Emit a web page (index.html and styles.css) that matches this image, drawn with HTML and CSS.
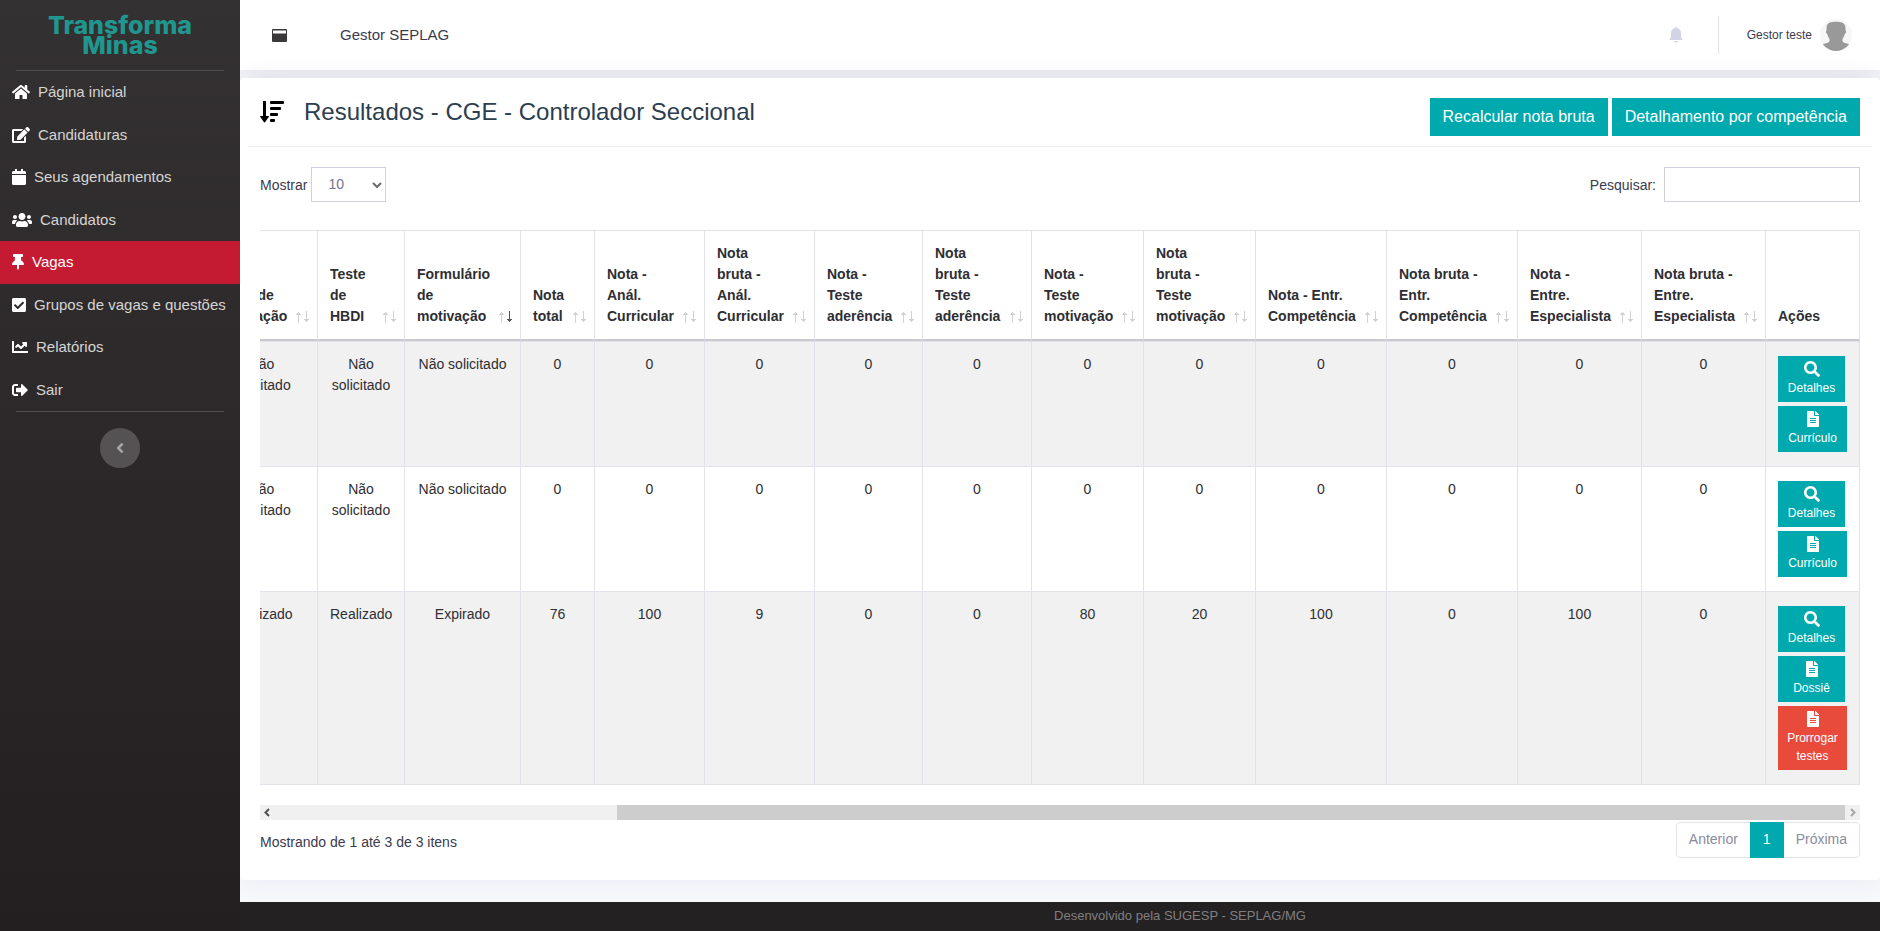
FILE: index.html
```html
<!DOCTYPE html>
<html lang="pt-BR">
<head>
<meta charset="utf-8">
<title>Transforma Minas - Resultados</title>
<link rel="stylesheet" href="styles.css">
</head>
<body>
<svg class="sprite" aria-hidden="true">
  <symbol id="i-search" viewBox="0 0 512 512"><path d="M505 442.7L405.3 343c-4.500-4.500-10.600-7-17-7H372c27.600-35.300 44-79.700 44-128C416 93.100 322.900 0 208 0S0 93.100 0 208s93.100 208 208 208c48.300 0 92.700-16.400 128-44v16.300c0 6.400 2.500 12.500 7 17l99.700 99.700c9.400 9.400 24.600 9.400 33.900 0l28.300-28.300c9.400-9.400 9.400-24.600.1-34zM208 336c-70.700 0-128-57.200-128-128 0-70.700 57.200-128 128-128 70.700 0 128 57.200 128 128 0 70.700-57.200 128-128 128z"/></symbol>
  <symbol id="i-file" viewBox="0 0 384 512"><path d="M224 136V0H24C10.700 0 0 10.700 0 24v464c0 13.300 10.700 24 24 24h336c13.300 0 24-10.700 24-24V160H248c-13.200 0-24-10.800-24-24zm64 236c0 6.600-5.400 12-12 12H108c-6.600 0-12-5.400-12-12v-8c0-6.600 5.400-12 12-12h168c6.600 0 12 5.400 12 12v8zm0-64c0 6.600-5.400 12-12 12H108c-6.600 0-12-5.400-12-12v-8c0-6.600 5.400-12 12-12h168c6.600 0 12 5.400 12 12v8zm0-72v8c0 6.600-5.400 12-12 12H108c-6.600 0-12-5.400-12-12v-8c0-6.600 5.400-12 12-12h168c6.600 0 12 5.400 12 12zm96-114.100v6.100H256V0h6.100c6.400 0 12.500 2.500 17 7l97.900 98c4.500 4.500 7 10.600 7 16.900z"/></symbol>
  <symbol id="i-sort" viewBox="0 0 13 12"><path fill="#c9c9cc" d="M2 1h1v11H2zM1 2h3v1H1zM0 3h5v1H0zM10 0h1v11h-1zM9 9h3v1H9zM8 8h5v1H8z" opacity=".85"/></symbol>
  <symbol id="i-sort-desc" viewBox="0 0 13 12"><path fill="#c9c9cc" d="M2 1h1v11H2zM1 2h3v1H1zM0 3h5v1H0z" opacity=".85"/><path fill="#55555c" d="M10 0h1v11h-1zM9 9h3v1H9zM8 8h5v1H8z"/></symbol>
</svg>
<div class="app">
  <aside class="sidebar">
    <a class="brand" href="#">Transforma<br>Minas</a>
    <nav class="menu">
      <a class="menu-item" href="#"><svg class="icon" viewBox="0 0 576 512"><path d="M280.37 148.26L96 300.11V464a16 16 0 0 0 16 16l112.06-.29a16 16 0 0 0 15.92-16V368a16 16 0 0 1 16-16h64a16 16 0 0 1 16 16v95.64a16 16 0 0 0 16 16.05L464 480a16 16 0 0 0 16-16V300L295.67 148.26a12.19 12.19 0 0 0-15.3 0zM571.6 251.47L488 182.56V44.05a12 12 0 0 0-12-12h-56a12 12 0 0 0-12 12v72.61L318.47 43a48 48 0 0 0-61 0L4.34 251.47a12 12 0 0 0-1.6 16.9l25.5 31A12 12 0 0 0 45.15 301l235.22-193.74a12.19 12.19 0 0 1 15.3 0L530.9 301a12 12 0 0 0 16.9-1.6l25.5-31a12 12 0 0 0-1.7-16.93z"/></svg>Página inicial</a>
      <a class="menu-item" href="#"><svg class="icon" viewBox="0 0 576 512"><path d="M402.6 83.2l90.2 90.2c3.8 3.8 3.8 10 0 13.8L274.4 405.6l-92.8 10.3c-12.4 1.4-22.9-9.1-21.5-21.5l10.3-92.8L388.8 83.2c3.8-3.8 10-3.8 13.8 0zm162-22.9l-48.8-48.8c-15.2-15.2-39.9-15.2-55.2 0l-35.4 35.4c-3.8 3.8-3.8 10 0 13.8l90.2 90.2c3.8 3.8 10 3.8 13.8 0l35.4-35.4c15.2-15.3 15.2-40 0-55.2zM384 346.2V448H64V128h229.8c3.2 0 6.2-1.3 8.5-3.5l40-40c7.6-7.6 2.2-20.5-8.5-20.5H48C21.5 64 0 85.5 0 112v352c0 26.5 21.5 48 48 48h352c26.5 0 48-21.5 48-48V306.2c0-10.7-12.9-16-20.5-8.5l-40 40c-2.2 2.3-3.5 5.3-3.5 8.5z"/></svg>Candidaturas</a>
      <a class="menu-item" href="#"><svg class="icon" viewBox="0 0 448 512"><path d="M12 192h424c6.6 0 12 5.4 12 12v260c0 26.5-21.5 48-48 48H48c-26.5 0-48-21.5-48-48V204c0-6.6 5.4-12 12-12zm436-44v-36c0-26.5-21.5-48-48-48h-48V12c0-6.6-5.4-12-12-12h-40c-6.6 0-12 5.4-12 12v52H160V12c0-6.6-5.4-12-12-12h-40c-6.6 0-12 5.4-12 12v52H48C21.5 64 0 85.5 0 112v36c0 6.6 5.4 12 12 12h424c6.6 0 12-5.4 12-12z"/></svg>Seus agendamentos</a>
      <a class="menu-item" href="#"><svg class="icon" viewBox="0 0 640 512"><path d="M96 224c35.3 0 64-28.7 64-64s-28.7-64-64-64-64 28.7-64 64 28.7 64 64 64zm448 0c35.3 0 64-28.7 64-64s-28.7-64-64-64-64 28.7-64 64 28.7 64 64 64zm32 32h-64c-17.6 0-33.5 7.1-45.1 18.6 40.3 22.1 68.9 62 75.1 109.4h66c17.7 0 32-14.3 32-32v-32c0-35.3-28.7-64-64-64zm-256 0c61.9 0 112-50.1 112-112S381.9 32 320 32 208 82.1 208 144s50.1 112 112 112zm76.8 32h-8.3c-20.8 10-43.9 16-68.5 16s-47.6-6-68.5-16h-8.3C179.6 288 128 339.6 128 403.2V432c0 26.5 21.5 48 48 48h288c26.5 0 48-21.5 48-48v-28.8c0-63.6-51.6-115.2-115.2-115.2zm-223.7-13.4C161.5 263.1 145.6 256 128 256H64c-35.3 0-64 28.7-64 64v32c0 17.7 14.3 32 32 32h65.9c6.3-47.4 34.9-87.3 75.2-109.4z"/></svg>Candidatos</a>
      <a class="menu-item active" href="#"><svg class="icon" viewBox="0 0 384 512"><path d="M298.028 214.267L285.793 96H328c13.255 0 24-10.745 24-24V24c0-13.255-10.745-24-24-24H56C42.745 0 32 10.745 32 24v48c0 13.255 10.745 24 24 24h42.207L85.972 214.267C37.465 236.82 0 277.261 0 328c0 13.255 10.745 24 24 24h136v104.007c0 1.242.289 2.467.845 3.578l24 48c2.941 5.882 11.364 5.893 14.311 0l24-48a8.008 8.008 0 0 0 .845-3.578V352h136c13.255 0 24-10.745 24-24-.001-51.183-37.983-91.42-85.973-113.733z"/></svg>Vagas</a>
      <a class="menu-item" href="#"><svg class="icon" viewBox="0 0 448 512"><path d="M400 480H48c-26.51 0-48-21.49-48-48V80c0-26.51 21.49-48 48-48h352c26.51 0 48 21.49 48 48v352c0 26.51-21.49 48-48 48zm-204.686-98.059l184-184c6.248-6.248 6.248-16.379 0-22.627l-22.627-22.627c-6.248-6.248-16.379-6.249-22.628 0L184 302.745l-70.059-70.059c-6.248-6.248-16.379-6.248-22.628 0l-22.627 22.627c-6.248 6.248-6.248 16.379 0 22.627l104 104c6.249 6.25 16.379 6.25 22.628.001z"/></svg>Grupos de vagas e questões</a>
      <a class="menu-item" href="#"><svg class="icon" viewBox="0 0 512 512"><path d="M496 384H64V80c0-8.84-7.16-16-16-16H16C7.16 64 0 71.16 0 80v336c0 17.67 14.33 32 32 32h464c8.84 0 16-7.16 16-16v-32c0-8.84-7.16-16-16-16zM464 96H345.94c-21.38 0-32.09 25.85-16.97 40.97l32.4 32.4L288 242.75l-73.37-73.37c-12.5-12.5-32.76-12.5-45.25 0l-68.69 68.69c-6.25 6.25-6.25 16.38 0 22.63l22.62 22.62c6.25 6.25 16.38 6.25 22.63 0L192 237.25l73.37 73.37c12.5 12.5 32.76 12.5 45.25 0l96-96 32.4 32.4c15.12 15.12 40.97 4.41 40.97-16.97V112c.01-8.84-7.15-16-15.99-16z"/></svg>Relatórios</a>
      <a class="menu-item" href="#"><svg class="icon" viewBox="0 0 512 512"><path d="M497 273L329 441c-15 15-41 4.500-41-17v-96H152c-13.300 0-24-10.700-24-24v-96c0-13.300 10.700-24 24-24h136V88c0-21.400 25.900-32 41-17l168 168c9.300 9.400 9.300 24.600 0 34zM192 436v-40c0-6.600-5.400-12-12-12H96c-17.700 0-32-14.300-32-32V160c0-17.700 14.300-32 32-32h84c6.600 0 12-5.400 12-12V76c0-6.600-5.400-12-12-12H96c-53 0-96 43-96 96v192c0 53 43 96 96 96h84c6.600 0 12-5.400 12-12z"/></svg>Sair</a>
    </nav>
    <button class="collapse" type="button" aria-label="Recolher menu"><svg viewBox="0 0 256 512"><path d="M31.7 239l136-136c9.400-9.400 24.600-9.400 33.900 0l22.600 22.600c9.400 9.400 9.400 24.600 0 33.900L127.900 256l96.400 96.400c9.400 9.400 9.400 24.600 0 33.900L201.700 409c-9.400 9.400-24.600 9.400-33.900 0l-136-136c-9.500-9.400-9.500-24.600-.1-34z"/></svg></button>
  </aside>
  <div class="content">
    <header class="topbar">
      <svg class="topbar-icon" viewBox="0 0 15 13"><path fill-rule="evenodd" d="M1 0h13a1 1 0 0 1 1 1v11a1 1 0 0 1-1 1H1a1 1 0 0 1-1-1V1a1 1 0 0 1 1-1zM1 1.500v3h13v-3z"/></svg>
      <span class="topbar-title">Gestor SEPLAG</span>
      <button class="bell" type="button" aria-label="Notificações"><svg viewBox="0 0 14 16"><path d="M7 0a1 1 0 0 0-1 1C3.300 1.600 2 3.500 2 6v4L.6 12.200V13h12.800v-.8L12 10V6c0-2.500-1.300-4.400-4-5a1 1 0 0 0-1-1zM5 14h4a2 1.500 0 0 1-4 0z"/></svg></button>
      <div class="user">
        <span>Gestor teste</span>
        <svg class="avatar" viewBox="0 0 32 32"><defs><clipPath id="disc"><circle cx="16" cy="16" r="16"/></clipPath></defs><g clip-path="url(#disc)"><path fill="#f6f6f6" d="M0 0h32v32H0z"/><path fill="#999" d="M16 2.800c5 0 9.200 1.200 9.400 5.200l.1 3.500c1 .3.600 3-.8 3.600-.4 2-1 3.400-2.200 4.600-.2 2.300 0 3.300 1.700 4 2.300.9 4.800 1.200 6.800 2.300V32H1v-6c2-1.100 4.500-1.400 6.800-2.300 1.700-.7 1.900-1.700 1.700-4-1.200-1.200-1.800-2.600-2.200-4.600-1.400-.6-1.800-3.300-.8-3.600L6.600 8c.2-4 4.400-5.200 9.400-5.200z"/></g></svg>
      </div>
    </header>
    <main class="card">
      <div class="card-head">
        <svg class="head-icon" viewBox="0 0 24 22"><path d="M3 .5Q3 0 3.500 0h2q.5 0 .5.500V15h2.500q.8.200.2.900L5 21.300q-.5.500-1 0L.3 15.900q-.6-.7.200-.9H3z"/><rect x="10" y="0" width="14" height="3" rx="1"/><rect x="10" y="6" width="11" height="3" rx="1"/><rect x="10" y="12" width="8" height="3" rx="1"/><rect x="10" y="18" width="5" height="3" rx="1"/></svg>
        <h1>Resultados - CGE - Controlador Seccional</h1>
        <div class="head-actions">
          <button class="btn" type="button">Recalcular nota bruta</button>
          <button class="btn" type="button">Detalhamento por competência</button>
        </div>
      </div>
      <div class="card-body">
        <div class="filters">
          <div class="field"><label for="len">Mostrar</label><span class="select-wrap"><select id="len"><option>10</option><option>25</option></select><svg viewBox="0 0 10 6"><path d="M1 1l4 4 4-4"/></svg></span></div>
          <div class="field search"><label for="q">Pesquisar:</label><input id="q" type="search"></div>
        </div>
        <div class="scroller">
          <table>
            <colgroup><col class="w112"><col class="w87"><col class="w116"><col class="w74"><col class="w110"><col class="w110"><col class="w108"><col class="w109"><col class="w112"><col class="w112"><col class="w131"><col class="w131"><col class="w124"><col class="w124"><col class="w94"></colgroup>
            <thead><tr>
              <th>Teste de<br>motivação<svg class="sort"><use href="#i-sort"/></svg></th>
              <th>Teste<br>de<br>HBDI<svg class="sort"><use href="#i-sort"/></svg></th>
              <th>Formulário<br>de<br>motivação<svg class="sort"><use href="#i-sort-desc"/></svg></th>
              <th>Nota<br>total<svg class="sort"><use href="#i-sort"/></svg></th>
              <th>Nota -<br>Anál.<br>Curricular<svg class="sort"><use href="#i-sort"/></svg></th>
              <th>Nota<br>bruta -<br>Anál.<br>Curricular<svg class="sort"><use href="#i-sort"/></svg></th>
              <th>Nota -<br>Teste<br>aderência<svg class="sort"><use href="#i-sort"/></svg></th>
              <th>Nota<br>bruta -<br>Teste<br>aderência<svg class="sort"><use href="#i-sort"/></svg></th>
              <th>Nota -<br>Teste<br>motivação<svg class="sort"><use href="#i-sort"/></svg></th>
              <th>Nota<br>bruta -<br>Teste<br>motivação<svg class="sort"><use href="#i-sort"/></svg></th>
              <th>Nota - Entr.<br>Competência<svg class="sort"><use href="#i-sort"/></svg></th>
              <th>Nota bruta -<br>Entr.<br>Competência<svg class="sort"><use href="#i-sort"/></svg></th>
              <th>Nota -<br>Entre.<br>Especialista<svg class="sort"><use href="#i-sort"/></svg></th>
              <th>Nota bruta -<br>Entre.<br>Especialista<svg class="sort"><use href="#i-sort"/></svg></th>
              <th>Ações</th>
            </tr></thead>
            <tbody>
              <tr><td>Não<br>solicitado</td><td>Não<br>solicitado</td><td>Não solicitado</td><td>0</td><td>0</td><td>0</td><td>0</td><td>0</td><td>0</td><td>0</td><td>0</td><td>0</td><td>0</td><td>0</td>
                <td class="actions"><a class="act" href="#"><svg><use href="#i-search"/></svg>Detalhes</a><a class="act wide" href="#"><svg><use href="#i-file"/></svg>Currículo</a></td></tr>
              <tr><td>Não<br>solicitado</td><td>Não<br>solicitado</td><td>Não solicitado</td><td>0</td><td>0</td><td>0</td><td>0</td><td>0</td><td>0</td><td>0</td><td>0</td><td>0</td><td>0</td><td>0</td>
                <td class="actions"><a class="act" href="#"><svg><use href="#i-search"/></svg>Detalhes</a><a class="act wide" href="#"><svg><use href="#i-file"/></svg>Currículo</a></td></tr>
              <tr><td>Realizado</td><td>Realizado</td><td>Expirado</td><td>76</td><td>100</td><td>9</td><td>0</td><td>0</td><td>80</td><td>20</td><td>100</td><td>0</td><td>100</td><td>0</td>
                <td class="actions"><a class="act" href="#"><svg><use href="#i-search"/></svg>Detalhes</a><a class="act" href="#"><svg><use href="#i-file"/></svg>Dossiê</a><a class="act wide danger" href="#"><svg><use href="#i-file"/></svg>Prorrogar<br>testes</a></td></tr>
            </tbody>
          </table>
        </div>
        <div class="scrollbar" aria-hidden="true">
          <svg class="step" viewBox="0 0 15 15"><path d="M9 4L5.500 7.500 9 11"/></svg>
          <div class="track"><div class="thumb"></div></div>
          <svg class="step off" viewBox="0 0 15 15"><path d="M6 4l3.500 3.500L6 11"/></svg>
        </div>
        <div class="table-foot">
          <span class="info">Mostrando de 1 até 3 de 3 itens</span>
          <div class="pager"><a href="#">Anterior</a><a class="current" href="#">1</a><a href="#">Próxima</a></div>
        </div>
      </div>
    </main>
    <footer class="footer">Desenvolvido pela SUGESP - SEPLAG/MG</footer>
  </div>
</div>
</body>
</html>
```

FILE: styles.css
```css
* { box-sizing: border-box; }
body { margin: 0; background: #f7f8fc; color: #3a3b4d; font: 14px/21px "Liberation Sans", Arial, sans-serif; }
a { text-decoration: none; color: inherit; }
button, select, input { font: inherit; }
button { border: 0; padding: 0; cursor: pointer; }
svg { fill: currentColor; }
.sprite { display: none; }
.app { display: flex; min-height: 100vh; }

.sidebar { position: relative; z-index: 1; flex: 0 0 240px; display: flex; flex-direction: column; background: linear-gradient(#343132, #231f20); font-size: 15px; line-height: 1.5; }
.brand { margin: 0 16px; height: 71px; padding-top: 15px; border-bottom: 1px solid #504e4f; color: #1f968e; text-align: center; font: 800 25px/20px Inter, sans-serif; }
.menu { padding-bottom: 1px; }
.menu::after { content: ""; display: block; margin: 0 16px; border-top: 1px solid #504e4f; }
.menu-item { display: flex; align-items: center; gap: 8px; padding: 10px 12px; color: #d6d5d5; white-space: nowrap; }
.menu-item.active { background: #c41a32; color: #fff; }
.icon { height: 16px; color: #fff; }
.collapse { width: 40px; height: 40px; margin: 15px auto 0; border-radius: 50%; background: #545252; color: #a9a8a8; display: flex; align-items: center; justify-content: center; }
.collapse svg { height: 16px; }

.content { flex: 1; min-width: 0; display: flex; flex-direction: column; }
.topbar { height: 70px; display: flex; align-items: center; padding: 0 28px 0 32px; background: #fff; box-shadow: 0 0 40px rgba(40, 40, 60, .12); }
.topbar-icon { width: 15px; margin-right: 53px; color: #3a3839; }
.topbar-title { padding-bottom: 2px; font-size: 15px; }
.bell { margin-left: auto; background: none; color: #d2d3e4; height: 16px; display: flex; }
.bell svg { height: 16px; }
.user { display: flex; align-items: center; gap: 8px; height: 38px; margin-left: 35px; padding-left: 28px; border-left: 1px solid #e2e3ee; font-size: 12px; }
.avatar { width: 32px; height: 32px; }

.card { margin-top: 8px; background: #fff; border-radius: 4px; box-shadow: 0 0 24px rgba(50, 50, 80, .07); }
.card-head { display: flex; align-items: center; height: 69px; margin: 0 8px; padding: 0 12px; border-bottom: 1px solid #ebedf2; }
.head-icon { width: 24px; height: 22px; margin-right: 20px; color: #000; }
h1 { margin: 0; font-size: 24px; line-height: 36px; font-weight: 400; color: #2c3e50; }
.head-actions { display: flex; gap: 4px; margin-left: auto; padding-top: 10px; }
.btn { height: 38px; padding: 0 13px 2px; background: #00a9ad; color: #fff; font-size: 16px; }
.card-body { padding: 20px 20px 22px; }

.filters { display: flex; justify-content: space-between; margin-bottom: 28px; }
.field { display: flex; align-items: center; gap: 4px; }
.field label { padding-top: 2px; }
.field.search { gap: 8px; }
.select-wrap { display: grid; align-items: center; }
.select-wrap select { grid-area: 1 / 1; width: 75px; height: 35px; padding: 0 16px; appearance: none; border: 1px solid #d2d0e0; border-radius: 0; background: #fff; color: #74758a; }
.select-wrap svg { grid-area: 1 / 1; justify-self: end; width: 10px; margin-right: 4px; fill: none; stroke: #6a6a6a; stroke-width: 2; pointer-events: none; }
.field input { width: 196px; height: 35px; border: 1px solid #d2d0e0; border-radius: 0; background: #fff; padding: 0 12px; appearance: none; }

.scroller { display: flex; justify-content: flex-end; overflow: hidden; }
table { flex: none; width: 1654px; min-width: 100%; table-layout: fixed; border-collapse: separate; border-spacing: 0; border-top: 1px solid #e2e2ef; color: #2e2e33; }
.w74 { width: 74px; } .w87 { width: 87px; } .w94 { width: 94px; } .w108 { width: 108px; } .w109 { width: 109px; } .w110 { width: 110px; }
.w112 { width: 112px; } .w116 { width: 116px; } .w124 { width: 124px; } .w131 { width: 131px; }
th, td { padding: 12px 0 12px 12px; border-right: 1px solid #e2e2ef; white-space: nowrap; }
th { position: relative; border-bottom: 2px solid #c9c9ce; text-align: left; vertical-align: bottom; }
.sort { position: absolute; right: 8px; bottom: 16px; width: 13px; height: 12px; }
td { padding-right: 12px; vertical-align: top; text-align: center; border-bottom: 1px solid #e2e2ef; }
tbody tr:first-child td { border-top: 1px solid #e2e2ef; }
tbody tr:nth-child(odd) { background: #f1f1f2; }
.actions { text-align: left; }
.act { display: block; width: 67px; margin: 2px 0 4px; padding: 5px 0; background: #00a9ad; color: #fff; font-size: 12px; line-height: 18px; text-align: center; }
.act + .act { margin-top: 0; }
.act:last-child { margin-bottom: 2px; }
.act.wide { width: 69px; }
.act.danger { background: #e84b3c; }
.act svg { display: block; width: 16px; height: 16px; margin: 0 auto 2px; }

.scrollbar { display: flex; height: 15px; margin-top: 20px; background: #f0f0f0; }
.step { width: 15px; height: 15px; fill: none; stroke: #505050; stroke-width: 2; }
.step.off { stroke: #a8a8a8; }
.track { flex: 1; display: flex; justify-content: flex-end; }
.thumb { width: 78.2%; background: #cdcdcd; }
.table-foot { display: flex; justify-content: space-between; align-items: flex-start; padding-top: 2px; }
.info { padding-top: 10px; }
.pager { display: flex; height: 36px; border: 1px solid #e2e2ef; border-radius: 4px; color: #8a8ba0; line-height: 32px; }
.pager a { padding: 0 12px; }
.pager .current { margin: -1px 0; padding: 1px 13px; background: #00a9ad; color: #fff; }

.footer { margin-top: auto; height: 29px; padding-left: 240px; background: #232122; color: #807f80; font-size: 13px; line-height: 27px; text-align: center; }
```
